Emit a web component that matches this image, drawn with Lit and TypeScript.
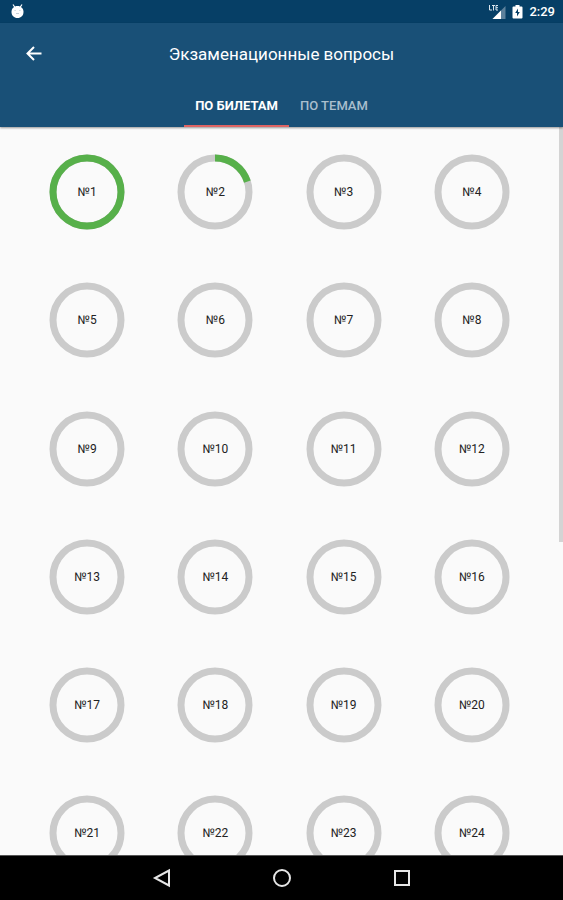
import { LitElement, html, css, svg } from "lit";
import { customElement, property, state } from "lit/decorators.js";
import { classMap } from "lit/directives/class-map.js";

const RADIUS = 34;
const LENGTH = 2 * Math.PI * RADIUS;

@customElement("ticket-ring")
export class TicketRing extends LitElement {
  @property({ type: Number }) number = 1;
  @property({ type: Number }) progress = 0;

  static styles = css`
    :host {
      display: flex;
      align-items: center;
      justify-content: center;
      aspect-ratio: 1;
    }
    .ring {
      display: grid;
      place-items: center;
      width: 76px;
      height: 76px;
      padding: 0;
      border: 0;
      background: none;
      color: #222;
      font: 12px/16px Roboto, "Noto Sans", sans-serif;
      cursor: pointer;
    }
    .ring > * {
      grid-area: 1 / 1;
    }
    .track {
      stroke: #cbcbcb;
    }
    .value {
      stroke: #57b04a;
    }
    svg {
      display: block;
      fill: none;
      stroke-width: 7;
    }
  `;

  render() {
    const arc = LENGTH * this.progress;
    return html`
      <button class="ring" type="button">
        <svg width="76" height="76" viewBox="0 0 76 76" aria-hidden="true">
          <circle class="track" cx="38" cy="38" r=${RADIUS} />
          ${this.progress > 0
            ? svg`<circle class="value" cx="38" cy="38" r=${RADIUS}
                stroke-dasharray="${arc} ${LENGTH}" transform="rotate(-90 38 38)" />`
            : null}
        </svg>
        <span>№${this.number}</span>
      </button>
    `;
  }
}

@customElement("app-root")
export class AppRoot extends LitElement {
  @state() private tab = 0;

  private tabs = ["ПО БИЛЕТАМ", "ПО ТЕМАМ"];
  private tickets = Array.from({ length: 24 }, (_, i) => ({
    number: i + 1,
    progress: i === 0 ? 1 : i === 1 ? 0.2 : 0,
  }));

  static styles = css`
    :host {
      display: flex;
      flex-direction: column;
      height: 100vh;
      background: #fafafa;
      font-family: Roboto, "Noto Sans", sans-serif;
    }
    * {
      box-sizing: border-box;
    }
    svg {
      display: block;
    }
    button {
      padding: 0;
      border: 0;
      background: none;
      font-family: inherit;
      cursor: pointer;
    }
    .status {
      flex: none;
      display: flex;
      align-items: center;
      justify-content: space-between;
      height: 23px;
      padding: 0 8px 0 10px;
      background: #063f66;
      color: #fff;
    }
    .indicators {
      display: flex;
      align-items: center;
      gap: 6px;
      font-size: 13px;
      font-weight: 500;
      line-height: 16px;
    }
    header {
      flex: none;
      position: relative;
      z-index: 1;
      background: #195077;
      color: #fff;
      box-shadow: 0 1px 2px rgba(0, 0, 0, 0.4);
    }
    .toolbar {
      display: grid;
      grid-template-columns: 68px 1fr 68px;
      align-items: center;
      height: 61px;
    }
    .back {
      display: grid;
      place-items: center;
      height: 48px;
    }
    h1 {
      margin: 0;
      font-size: 17px;
      font-weight: 400;
      line-height: 24px;
      text-align: center;
    }
    .tabs {
      display: flex;
      justify-content: center;
    }
    .tab {
      height: 43px;
      padding: 3px 11px 0;
      border-bottom: 2px solid transparent;
      color: #a9bfce;
      font-size: 13px;
      font-weight: 500;
      line-height: 16px;
    }
    .tab.active {
      border-color: #dd6464;
      color: #fff;
      font-weight: 700;
    }
    main {
      flex: 1;
      min-height: 0;
      position: relative;
      overflow: hidden;
    }
    .grid {
      display: grid;
      grid-template-columns: repeat(4, 1fr);
      padding: 1px 27px 0 23px;
    }
    .thumb {
      position: absolute;
      top: 0;
      right: 0;
      width: 4px;
      height: 57%;
      background: #d4d4d4;
    }
    .nav {
      flex: none;
      position: relative;
      display: flex;
      justify-content: center;
      gap: 72px;
      height: 45px;
      border-top: 1px solid #555;
      background: #000;
    }
    .nav button {
      display: grid;
      place-items: center;
      width: 48px;
    }
    .nav svg {
      fill: none;
      stroke: #e6e6e6;
      stroke-width: 2;
    }
  `;

  render() {
    return html`
      <div class="status">
        <svg width="15" height="15" viewBox="0 0 15 15" aria-hidden="true">
          <path d="M3 .5 5 3.500M12 .5 10 3.500" stroke="#fff" stroke-width="1.200" />
          <path
            d="M7.500 2C11 2 13.500 4.500 13.500 8S11 14 7.500 14 1.500 11.500 1.500 8 4 2 7.500 2Z"
            fill="#fff"
          />
          <path d="M4.500 6.500h1.200M9.300 6.500h1.200M6 9.500h3" stroke="#c3d0da" />
        </svg>
        <div class="indicators">
          <svg width="18" height="15" viewBox="0 0 18 15" aria-label="LTE">
            <path d="M17.500 2v13H4.500Z" fill="#5d819c" />
            <path d="M13 6.500V15H4.500Z" fill="#fff" />
            <path
              d="M1.500 1v5h2.500M4 1.500h3M5.500 1.500V6.500M10 1.500h-2v4.500h2M8 3.700h2"
              fill="none"
              stroke="#dbe6ee"
            />
          </svg>
          <svg width="11" height="14" viewBox="0 0 11 14" aria-label="Зарядка">
            <path
              fill="#fff"
              d="M3.500 0h4v1.500h2q1 0 1 1v10q0 1-1 1h-8q-1 0-1-1v-10q0-1 1-1h2Z"
            />
            <path fill="#063f66" d="M6 3.500 3.200 8h1.800v3.500L7.800 7H6Z" />
          </svg>
          <span>2:29</span>
        </div>
      </div>

      <header>
        <div class="toolbar">
          <button class="back" type="button" aria-label="Назад">
            <svg width="18" height="18" viewBox="0 0 18 18">
              <path
                d="M16.500 8.500H2.500M9 2 2.500 8.500 9 15"
                fill="none"
                stroke="#fff"
                stroke-width="2"
              />
            </svg>
          </button>
          <h1>Экзаменационные вопросы</h1>
        </div>
        <div class="tabs" role="tablist">
          ${this.tabs.map(
            (label, i) => html`
              <button
                type="button"
                role="tab"
                aria-selected=${this.tab === i}
                class=${classMap({ tab: true, active: this.tab === i })}
                @click=${() => (this.tab = i)}
              >
                ${label}
              </button>
            `
          )}
        </div>
      </header>

      <main>
        <div class="grid">
          ${this.tickets.map(
            (t) => html`<ticket-ring .number=${t.number} .progress=${t.progress}></ticket-ring>`
          )}
        </div>
        <div class="thumb"></div>
      </main>

      <nav class="nav">
        <button type="button" aria-label="Назад">
          <svg width="20" height="20" viewBox="0 0 20 20"><path d="M17 2.500v15L3 10Z" /></svg>
        </button>
        <button type="button" aria-label="Домой">
          <svg width="20" height="20" viewBox="0 0 20 20"><circle cx="10" cy="10" r="8" /></svg>
        </button>
        <button type="button" aria-label="Обзор">
          <svg width="20" height="20" viewBox="0 0 20 20">
            <rect x="3" y="3" width="14" height="14" />
          </svg>
        </button>
      </nav>
    `;
  }
}
